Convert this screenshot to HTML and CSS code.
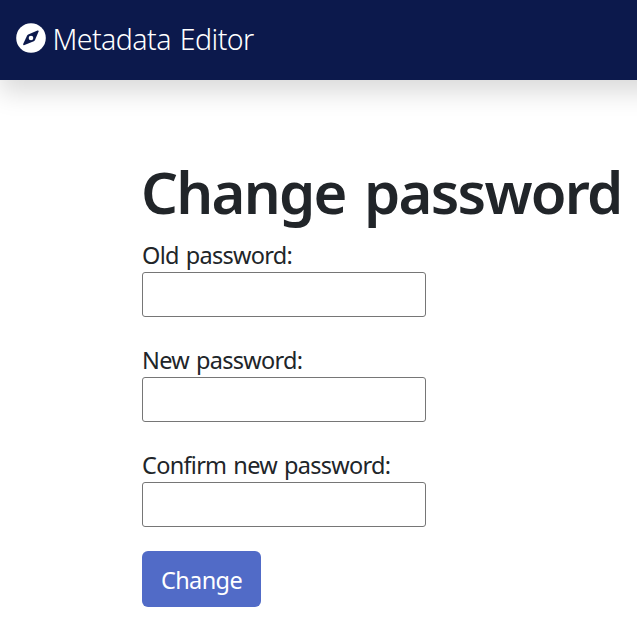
FILE: index.html
```html
<!DOCTYPE html>
<html lang="en">
<head>
<meta charset="utf-8">
<title>Metadata Editor</title>
<link rel="stylesheet" href="styles.css">
</head>
<body>
<header class="navbar">
  <svg class="logo" viewBox="0 0 30 30" aria-hidden="true">
    <circle cx="15" cy="15" r="14.8" fill="#fff"/>
    <path d="M21.5 7.6 L12.2 11.5 Q11.4 11.9 11 12.7 L7.2 21 Q6.9 22.6 8.5 22.1 L17.8 18.2 Q18.6 17.8 19 17 L22.6 8.6 Q22.8 7.2 21.5 7.6Z" fill="#0c194c"/>
    <circle cx="15" cy="15" r="2.3" fill="#fff"/>
  </svg>
  <span class="brand">Metadata Editor</span>
</header>
<main class="content">
  <h1 class="title">Change password</h1>
  <form class="form">
    <div class="field"><label class="label" for="old">Old password:</label><input class="input" id="old" type="password"></div>
    <div class="field"><label class="label" for="new">New password:</label><input class="input" id="new" type="password"></div>
    <div class="field"><label class="label" for="confirm">Confirm new password:</label><input class="input" id="confirm" type="password"></div>
    <button class="button" type="button">Change</button>
  </form>
</main>
</body>
</html>
```
FILE: styles.css
```css
* { box-sizing: border-box; }
body { margin: 0; background: #fff; color: #212529; font-family: "Noto Sans", "Open Sans", sans-serif; font-size: 23.5px; overflow: hidden; }
.navbar { display: flex; align-items: center; gap: 7px; height: 80px; margin-right: -60px; padding: 0 16px 4px 15.5px; background: #0c194c; color: #fff; box-shadow: 0 12px 24px rgba(0,0,0,.15); }
.logo { width: 30px; height: 30px; flex: none; }
.brand { padding-top: 1px; font-size: 28.5px; letter-spacing: -.55px; word-spacing: 2px; font-weight: 300; white-space: nowrap; }
.content { padding: 76px 0 0 142px; }
.title { margin: 0 0 0 -1px; height: 82px; font-size: 58px; line-height: 72px; font-weight: 600; letter-spacing: -1.75px; word-spacing: 5px; white-space: nowrap; }
.form { display: flex; flex-direction: column; align-items: flex-start; }
.field { height: 105px; padding-top: 1px; display: flex; flex-direction: column; align-items: flex-start; }
.label { height: 33px; line-height: 33px; letter-spacing: -.72px; word-spacing: 1.6px; white-space: nowrap; }
.input { width: 284px; height: 45px; border: 1px solid #767676; border-radius: 3px; padding: 0 8px; }
.button { width: 119px; height: 56px; margin-top: -2px; padding: 2px 0 0; border: 0; border-radius: 6px; background: #516bc7; color: #fff; font: inherit; letter-spacing: -.6px; }
```
